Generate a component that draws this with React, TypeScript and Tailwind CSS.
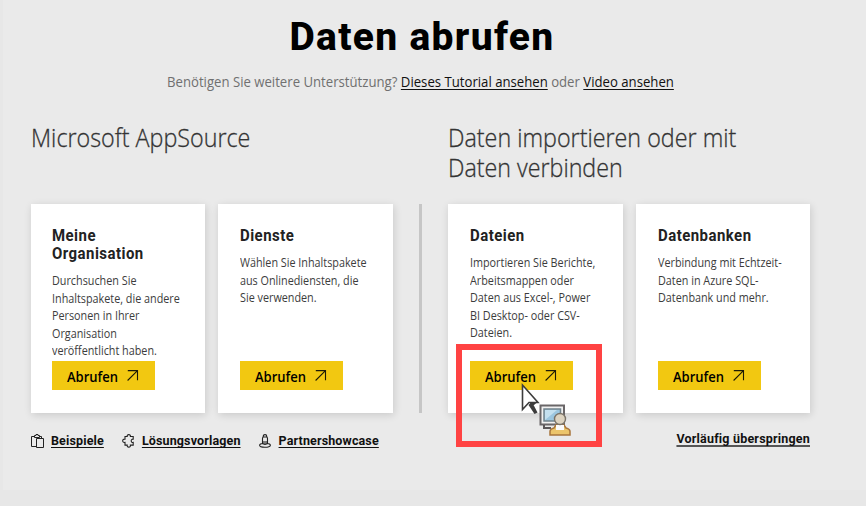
import type { ReactNode } from "react";

type CardProps = { title: string[]; lines: string[]; className: string };

function Arrow() {
  return (
    <svg width="12" height="12" viewBox="0 0 12 12" fill="none" stroke="#1c1a05" strokeWidth="1.1">
      <path d="M.8 .6h9.700v9.700M10.500.6.6 10.500" />
    </svg>
  );
}

function Card({ title, lines, className }: CardProps) {
  return (
    <section className={`flex h-[209px] shrink-0 flex-col bg-white pt-[23px] pb-[23px] shadow-[1px_2px_8px_rgba(0,0,0,0.14)] ${className}`}>
      <h3 className="font-[Roboto,sans-serif] text-[16px] leading-[18px] font-bold tracking-[0.5px] text-[#222]">
        {title.map((t) => (
          <span key={t} className="block w-max origin-left scale-x-[0.935]">{t}</span>
        ))}
      </h3>
      <p className="mt-[9px] text-[12px] leading-[17.5px] text-[#3c3c3c]">
        {lines.map((t) => (
          <span key={t} className="block w-max origin-left scale-x-[0.9]">{t}</span>
        ))}
      </p>
      <button className="mt-auto flex h-[29px] w-[103px] shrink-0 items-center bg-[#f2c811] pl-[15px] text-[14px] font-semibold text-black">
        <span className="w-[60px] origin-left scale-x-[0.93] pt-px text-left whitespace-nowrap">Abrufen</span>
        <Arrow />
      </button>
    </section>
  );
}

function FootLink({ icon, children }: { icon: ReactNode; children: string }) {
  return (
    <a className="flex items-center gap-[7px]">
      {icon}
      <span className="tracking-[0.14px] whitespace-nowrap underline decoration-1 underline-offset-[2px] [text-decoration-skip-ink:none]">{children}</span>
    </a>
  );
}

export default function App() {
  return (
    <div className="h-[506px] w-[866px] overflow-hidden bg-[#e7e7e7] pl-[3px] font-['Open_Sans',sans-serif]">
      <main className="relative h-[490px] bg-[#eaeaea] pl-[28px]">
        <header className="-ml-[31px] flex h-[122px] flex-col">
          <h1 className="mt-[13px] ml-[289.5px] h-[48px] w-max font-[Roboto,sans-serif] text-[39px] leading-[48px] font-extrabold tracking-[1.3px] text-black">Daten abrufen</h1>
          <p className="mt-[11px] ml-[167px] w-max origin-left scale-x-[0.94] text-[14px] leading-[20px] whitespace-nowrap text-[#707070]">
            Benötigen Sie weitere Unterstützung?{" "}
            <a className="text-[#111] underline underline-offset-2">Dieses Tutorial ansehen</a>
            {" "}oder{" "}
            <a className="text-[#111] underline underline-offset-2">Video ansehen</a>
          </p>
        </header>
        <div className="flex h-[82px] text-[25px] leading-[30px] font-light text-[#333] [-webkit-text-stroke:0.3px_#333]">
          <h2 className="w-[417px]">
            <span className="block w-max origin-left scale-x-[0.932]">Microsoft AppSource</span>
          </h2>
          <h2 className="w-[290px] whitespace-nowrap">
            <span className="block w-max origin-left scale-x-[0.932]">Daten importieren oder mit</span>
            <span className="block w-max origin-left scale-x-[0.93]">Daten verbinden</span>
          </h2>
        </div>
        <div className="flex">
          <Card className="w-[174px] pl-[21px]" title={["Meine", "Organisation"]} lines={["Durchsuchen Sie", "Inhaltspakete, die andere", "Personen in Ihrer", "Organisation", "veröffentlicht haben."]} />
          <div className="w-[13px]" />
          <Card className="w-[175px] pl-[22px]" title={["Dienste"]} lines={["Wählen Sie Inhaltspakete", "aus Onlinediensten, die", "Sie verwenden."]} />
          <div className="mr-[26px] ml-[26px] w-[3px] bg-[#c6c6c6]" />
          <Card className="w-[175px] pl-[22px]" title={["Dateien"]} lines={["Importieren Sie Berichte,", "Arbeitsmappen oder", "Daten aus Excel-, Power", "BI Desktop- oder CSV-", "Dateien."]} />
          <div className="w-[13px]" />
          <Card className="w-[174px] pl-[22px]" title={["Datenbanken"]} lines={["Verbindung mit Echtzeit-", "Daten in Azure SQL-", "Datenbank und mehr."]} />
        </div>
        <footer className="flex h-[50px] w-[779px] justify-between pt-[19px] font-[Roboto,sans-serif] text-[12.5px] leading-[14px] font-bold text-[#111]">
          <nav className="flex h-[18px] items-center gap-[18px]">
            <FootLink icon={
              <svg width="13" height="14" viewBox="0 0 13 14" fill="none" stroke="#222" strokeWidth="1">
                <path d="M5.5 12.5h-5v-10h3M8.5 2.5h2v2M3.5 3.5v-2h1.5v-1h2v1h1.5v2zM5.5 4.5h7v9h-7z" />
              </svg>
            }>Beispiele</FootLink>
            <FootLink icon={
              <svg width="13" height="14" viewBox="0 0 13 14" fill="none" stroke="#222" strokeWidth="1.1">
                <path d="M3 2.500h2.200C5 1.200 5.600.6 6.800.6S8.600 1.200 8.400 2.500h2.800v2.700c-1.300-.2-2 .6-2 1.600s.7 1.800 2 1.600v2.700H8.400c.2 1.300-.4 2-1.600 2s-1.800-.7-1.600-2H3V8.400C1.500 8.700.7 8 .7 6.800S1.500 5 3 5.200z" />
              </svg>
            }>Lösungsvorlagen</FootLink>
            <FootLink icon={
              <svg width="13" height="14" viewBox="0 0 13 14" fill="none" stroke="#222" strokeWidth="1.1">
                <path d="M3.500 9.500V4.500C3.500 3.500 4.300 3 4.300 2.200 4.300 1.200 5 .6 6 .6s1.700.6 1.700 1.600c0 .8.8 1.300.8 2.300v5M4.300 3h3.400M5 7v3M7 7v3M3.500 9.500C1.700 9.800.6 10.500.6 11.300c0 1.200 2.400 2 5.400 2s5.400-.8 5.400-2c0-.8-1.100-1.500-2.900-1.800-1 1.100-4 1.100-5 0" />
              </svg>
            }>Partnershowcase</FootLink>
          </nav>
          <a className="h-[15px] tracking-[0.2px] whitespace-nowrap underline decoration-[#555] decoration-2 underline-offset-[2px] [text-decoration-skip-ink:none]">Vorläufig überspringen</a>
        </footer>

        {/* Click highlight with the pointer above the page */}
        <div className="absolute top-[344px] left-[453px] h-[103px] w-[146px] border-[6px] border-[#ff4343]" />
        <svg className="absolute top-[382px] left-[517px]" width="56" height="56" viewBox="520 382 56 56">
          <path d="M522.500 385v24.500l6.500-7h9z" fill="#fff" stroke="#3c3c3c" strokeWidth="1.600" />
          <path d="M528.500 405l3.500-3 5.500 10.500-3 1.500z" fill="#3c3c3c" />
          <path d="M529 406l1.500-3.500h6.500l-3 2.500z" fill="#3c3c3c" />
          <path d="M540.500 405.500h23.500v19h-23.500z" fill="#f1f1f1" stroke="#6a6668" strokeWidth="2" />
          <path d="M544 409h16.500v12H544z" fill="#9cc6df" stroke="#71828c" strokeWidth="1.500" />
          <path d="M545 420l12-10h-12z" fill="#c4e0ef" />
          <path d="M544 425v3h7" fill="none" stroke="#5a5658" strokeWidth="2" />
          <path d="M550 435v-3.500c0-2 2-3 4-3.500l2-3h8l2 3c2 .5 4 1.500 4 3.500v3.500z" fill="#ecc56c" stroke="#a8763c" strokeWidth="1.500" />
          <path d="M556 425h8v5h-8z" fill="#fafafa" />
          <circle cx="560" cy="419" r="5.500" fill="#ddd3c0" stroke="#7a7368" strokeWidth="1.400" />
        </svg>
      </main>
    </div>
  );
}
